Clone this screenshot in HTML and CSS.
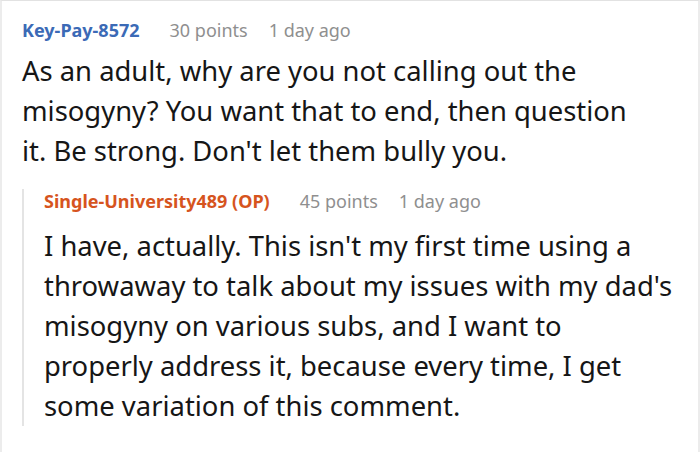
FILE: index.html
```html
<!DOCTYPE html>
<html>
<head>
<meta charset="utf-8">
<link rel="stylesheet" href="styles.css">
</head>
<body>
<div class="thread">
  <div class="comment">
    <div class="meta">
      <span class="author">Key-Pay-8572</span>
      <span class="info">30 points</span>
      <span class="info">1 day ago</span>
    </div>
    <p class="body">As an adult, why are you not calling out the<br>misogyny? You want that to end, then question<br>it. Be strong. Don't let them bully you.</p>
    <div class="reply">
      <div class="meta meta-reply">
        <span class="author op">Single-University489 (OP)</span>
        <span class="info">45 points</span>
        <span class="info">1 day ago</span>
      </div>
      <p class="body">I have, actually. This isn't my first time using a<br>throwaway to talk about my issues with my dad's<br>misogyny on various subs, and I want to<br>properly address it, because every time, I get<br>some variation of this comment.</p>
    </div>
  </div>
</div>
</body>
</html>
```
FILE: styles.css
```css
html, body {
  margin: 0;
  padding: 0;
  background: #fff;
}
body {
  width: 700px;
  height: 452px;
  overflow: hidden;
  font-family: "Noto Sans", "Open Sans", sans-serif;
}
.thread {
  box-sizing: border-box;
  width: 700px;
  height: 452px;
  border-top: 1px solid #e2e2e2;
  border-left: 2px solid #ececec;
  border-right: 2px solid #ececec;
  padding: 17px 0 0 20px;
}
.meta {
  display: flex;
  gap: 21px;
  font-size: 18px;
  line-height: 24px;
  height: 24px;
}
.author {
  font-weight: 700;
  color: #3b6ab6;
  margin-right: 9px;
}
.author.op {
  color: #d6541e;
}
.info {
  color: #8f8f8f;
}
.body {
  margin: 9px 0 0 0;
  font-size: 27.4px;
  line-height: 40px;
  color: #161616;
  white-space: nowrap;
}
.reply {
  margin-top: 30px;
  border-left: 2px solid #e4e4e4;
  padding-left: 20px;
}
.meta-reply {
  margin-top: -12px;
}
.reply .body {
  margin-top: 13px;
}
```
